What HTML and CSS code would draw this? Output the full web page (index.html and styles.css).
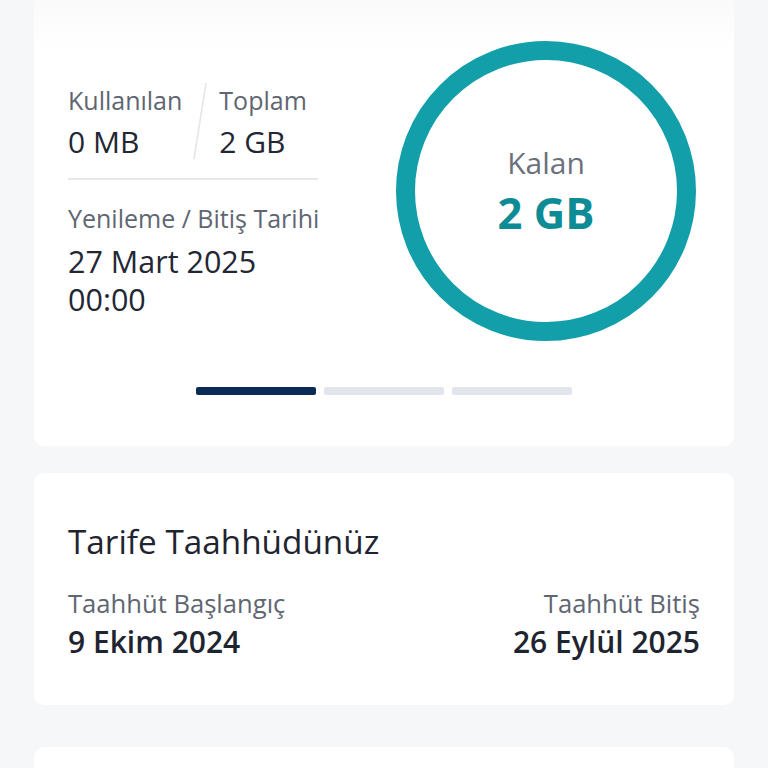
FILE: index.html
```html
<!DOCTYPE html>
<html lang="tr">
<head>
<meta charset="utf-8">
<title>Paket</title>
<link rel="stylesheet" href="styles.css">
</head>
<body>
<main class="page">
  <section class="card usage">
    <div class="usage-row">
      <div class="usage-info">
        <div class="stats">
          <div class="stat">
            <div class="label">Kullanılan</div>
            <div class="value">0 MB</div>
          </div>
          <svg class="slash" width="16" height="78" viewBox="0 0 16 78" aria-hidden="true">
            <line x1="14" y1="1" x2="2" y2="77" stroke="#e3e5e9" stroke-width="1.6"/>
          </svg>
          <div class="stat">
            <div class="label">Toplam</div>
            <div class="value">2 GB</div>
          </div>
        </div>
        <div class="rule"></div>
        <div class="renew">
          <div class="label">Yenileme / Bitiş Tarihi</div>
          <div class="value date">27 Mart 2025<br>00:00</div>
        </div>
      </div>
      <div class="ring">
        <div class="ring-label">Kalan</div>
        <div class="ring-value">2 GB</div>
      </div>
    </div>
    <div class="dots">
      <span class="dot active"></span>
      <span class="dot"></span>
      <span class="dot"></span>
    </div>
  </section>

  <section class="card commit">
    <h2 class="title">Tarife Taahhüdünüz</h2>
    <div class="commit-row">
      <div class="commit-item">
        <div class="label wide">Taahhüt Başlangıç</div>
        <div class="strong">9 Ekim 2024</div>
      </div>
      <div class="commit-item right">
        <div class="label wide">Taahhüt Bitiş</div>
        <div class="strong">26 Eylül 2025</div>
      </div>
    </div>
  </section>

  <section class="card next"></section>
</main>
</body>
</html>
```

FILE: styles.css
```css
* { box-sizing: border-box; }
html, body { margin: 0; padding: 0; }
body {
  background: #f6f7f9;
  font-family: "Open Sans", "Noto Sans", sans-serif;
  color: #1f2431;
  overflow: hidden;
  height: 768px;
}
.page {
  padding: 0 34px;
}
.card {
  background: #ffffff;
  border-radius: 10px;
}
.usage {
  margin-top: -10px;
  padding: 51px 34px 51px;
  background: linear-gradient(#f9f9f9 0, #ffffff 60px);
}
.usage-row {
  display: flex;
  justify-content: space-between;
  align-items: flex-start;
}
.usage-info {
  width: 250px;
  padding-top: 44px;
}
.stats {
  display: flex;
  align-items: flex-start;
}
.slash {
  margin: -3px 11px 0 10px;
  flex: none;
}
.label {
  font-size: 25px;
  line-height: 30px;
  color: #606671;
  white-space: nowrap;
}
.label.wide { font-size: 25.6px; }
.value {
  font-size: 30px;
  line-height: 36px;
  color: #222733;
  margin-top: 9px;
}
.rule {
  height: 2px;
  background: #e6e8ec;
  margin-top: 18px;
}
.renew { margin-top: 23px; }
.value.date {
  font-size: 30.5px;
  line-height: 38px;
  margin-top: 9px;
}
.ring {
  width: 300px;
  height: 300px;
  border-radius: 50%;
  border: 19px solid #139fa9;
  margin-right: 4px;
  display: flex;
  flex-direction: column;
  align-items: center;
  justify-content: center;
}
.ring-label {
  font-size: 30px;
  line-height: 34px;
  color: #6b717c;
}
.ring-value {
  font-size: 43.5px;
  line-height: 46px;
  font-weight: 700;
  color: #0e8c96;
  margin-top: 10px;
}
.dots {
  display: flex;
  justify-content: center;
  gap: 8px;
  margin-top: 46px;
}
.dot {
  width: 120px;
  height: 8px;
  border-radius: 2px;
  background: #e2e5eb;
}
.dot.active { background: #0b2a55; }
.commit {
  margin-top: 27px;
  padding: 48px 34px 45px;
}
.title {
  margin: 0;
  font-size: 33.3px;
  line-height: 40px;
  font-weight: 400;
  color: #1f2431;
}
.commit-row {
  display: flex;
  justify-content: space-between;
  margin-top: 28px;
}
.commit-item.right { text-align: right; }
.strong {
  font-size: 30px;
  line-height: 36px;
  font-weight: 600;
  color: #1f2431;
  margin-top: 5px;
}
.next {
  margin-top: 42px;
  height: 60px;
}
```
